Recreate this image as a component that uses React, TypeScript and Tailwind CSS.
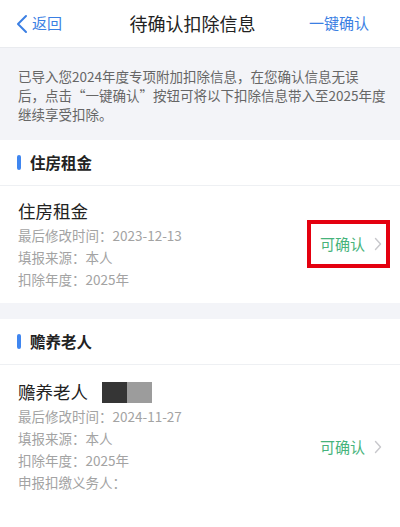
import React from "react";

const FONT = '"Noto Sans CJK SC", "Noto Sans", sans-serif';

type Item = {
  title: string;
  redacted?: boolean;
  lines: string[];
  highlight?: boolean;
};

const ChevronLeft = () => (
  <svg width="12" height="20" viewBox="0 0 12 20" fill="none">
    <path d="M10 2 L2 10 L10 18" stroke="#3b7fe3" strokeWidth="2" strokeLinecap="round" strokeLinejoin="round" />
  </svg>
);

const ChevronRight = () => (
  <svg width="8" height="14" viewBox="0 0 8 14" fill="none">
    <path d="M1.5 1.5 L6.5 7 L1.5 12.5" stroke="#c8c8cc" strokeWidth="1.4" strokeLinecap="round" strokeLinejoin="round" />
  </svg>
);

const SectionHeader = ({ label }: { label: string }) => (
  <div className="h-[46px] bg-white flex items-center pl-[17px] border-b border-[#eef0f3]">
    <span className="w-[4px] h-[15px] rounded-full bg-[#3f86f0] mr-[9px]" />
    <span className="text-[15.5px] font-bold text-[#222]">{label}</span>
  </div>
);

const ItemCard = ({ item, top }: { item: Item; top: string }) => (
  <div className={"bg-white flex items-center pl-[18px] pr-[10px] pb-[13px] " + top}>
    <div className="flex-1">
      <div className="flex items-center h-[26px]">
        <span className="text-[17.5px] text-[#222] leading-[26px]">{item.title}</span>
        {item.redacted && (
          <span className="ml-[14px] flex blur-[0.6px]">
            <span className="w-[25px] h-[21px] bg-[#353535]" />
            <span className="w-[25px] h-[21px] bg-[#9c9c9c]" />
          </span>
        )}
      </div>
      {item.lines.map((l, i) => (
        <div key={i} className="text-[13.5px] leading-[22px] text-[#a3a3a3]">
          {l}
        </div>
      ))}
    </div>
    <div
      className={
        "w-[83px] h-[48px] border-4 flex items-center pl-[9px] " +
        (item.highlight ? "border-[#e4000f]" : "border-transparent")
      }
    >
      <span className="text-[15px] text-[#46b37b] mr-[9px]">可确认</span>
      <ChevronRight />
    </div>
  </div>
);

export default function App() {
  const rent: Item = {
    title: "住房租金",
    lines: ["最后修改时间：2023-12-13", "填报来源：本人", "扣除年度：2025年"],
    highlight: true,
  };
  const elder: Item = {
    title: "赡养老人",
    redacted: true,
    lines: ["最后修改时间：2024-11-27", "填报来源：本人", "扣除年度：2025年", "申报扣缴义务人：", "\u00a0"],
  };

  return (
    <div className="w-[400px] h-[527px] overflow-hidden bg-[#f3f4f8]" style={{ fontFamily: FONT }}>
      {/* Header */}
      <div className="h-[48px] bg-white flex items-center justify-between pl-[16px] pr-[31px] border-b border-[#e9ebef]">
        <div className="flex items-center gap-[4px] w-[80px]">
          <ChevronLeft />
          <span className="text-[15px] text-[#3b7fe3]">返回</span>
        </div>
        <span className="text-[18px] text-[#222]">待确认扣除信息</span>
        <span className="w-[80px] text-right text-[15px] text-[#3b7fe3]">一键确认</span>
      </div>

      {/* Info */}
      <div className="px-[18px] pt-[19px] pb-[16px] text-[13.5px] leading-[19px] text-[#666]">
        <div className="whitespace-nowrap">已导入您2024年度专项附加扣除信息，在您确认信息无误</div>
        <div className="whitespace-nowrap">后，点击“一键确认”按钮可将以下扣除信息带入至2025年度</div>
        <div className="whitespace-nowrap">继续享受扣除。</div>
      </div>

      <SectionHeader label="住房租金" />
      <ItemCard item={rent} top="pt-[12px]" />

      <div className="h-[16px]" />

      <SectionHeader label="赡养老人" />
      <ItemCard item={elder} top="pt-[14px]" />
    </div>
  );
}
